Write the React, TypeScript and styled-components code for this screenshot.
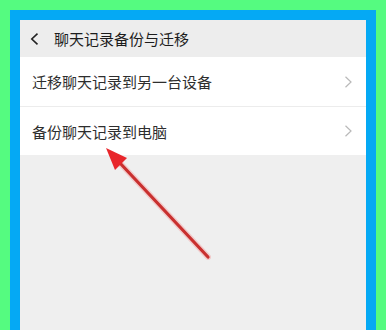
import React from 'react';
import styled, { createGlobalStyle } from 'styled-components';

const Global = createGlobalStyle`
  html, body { margin: 0; padding: 0; }
  body { font-family: "Noto Sans CJK SC", "Noto Sans", sans-serif; }
`

const Frame = styled.div`
  width: 386px; height: 330px;
  box-sizing: border-box;
  background: #55fb80;
  padding: 10px 10px 0;
  display: flex;
`

const Bezel = styled.div`
  flex: 1;
  background: #05a9f4;
  padding: 10px 10px 0;
  display: flex;
`

const Screen = styled.div`
  position: relative;
  flex: 1;
  background: #efefef;
  display: flex;
  flex-direction: column;
  overflow: hidden;
`

const Header = styled.div`
  height: 37px;
  display: flex;
  align-items: center;
  padding-left: 10px;
  gap: 15px;
  background: #ededed;
  color: #1c1c1c;
  font-size: 15px;
`

const List = styled.div`
  background: #fff;
  display: flex;
  flex-direction: column;
`

const Row = styled.div<{ $first?: boolean }>`
  height: ${p => p.$first ? 49 : 48}px;
  display: flex;
  align-items: center;
  justify-content: space-between;
  padding: 0 13px 0 12px;
  font-size: 15px;
  color: #2e2e2e;
  border-top: ${p => p.$first ? 'none' : '1px solid #ececec'};
`

const Arrow = styled.svg`
  position: absolute;
  left: 0; top: 0;
  pointer-events: none;
`

const Back = () => (
  <svg width="9" height="12" viewBox="0 0 9 12">
    <path d="M7.5 0.7 L1.8 6 L7.5 11.3" fill="none" stroke="#222" strokeWidth="1.6" />
  </svg>
)

const Chevron = () => (
  <svg width="9" height="12" viewBox="0 0 9 12">
    <path d="M1.5 0.8 L7 6 L1.5 11.2" fill="none" stroke="#b9b9b9" strokeWidth="1.2" />
  </svg>
)

export default function App() {
  return <Frame>
    <Global />
    <Bezel>
      <Screen>
        <Header><Back />聊天记录备份与迁移</Header>
        <List>
          <Row $first>迁移聊天记录到另一台设备<Chevron /></Row>
          <Row>备份聊天记录到电脑<Chevron /></Row>
        </List>
        <Arrow width="346" height="310">
          <line x1="99" y1="142" x2="188" y2="237" stroke="#f3b4b4" strokeWidth="6" strokeLinecap="round" opacity="0.6" />
          <line x1="99" y1="142" x2="188" y2="237" stroke="#c9302f" strokeWidth="3.2" strokeLinecap="round" />
          <polygon points="86,128 95,150 107,138" fill="#e8262b" />
        </Arrow>
      </Screen>
    </Bezel>
  </Frame>
}
